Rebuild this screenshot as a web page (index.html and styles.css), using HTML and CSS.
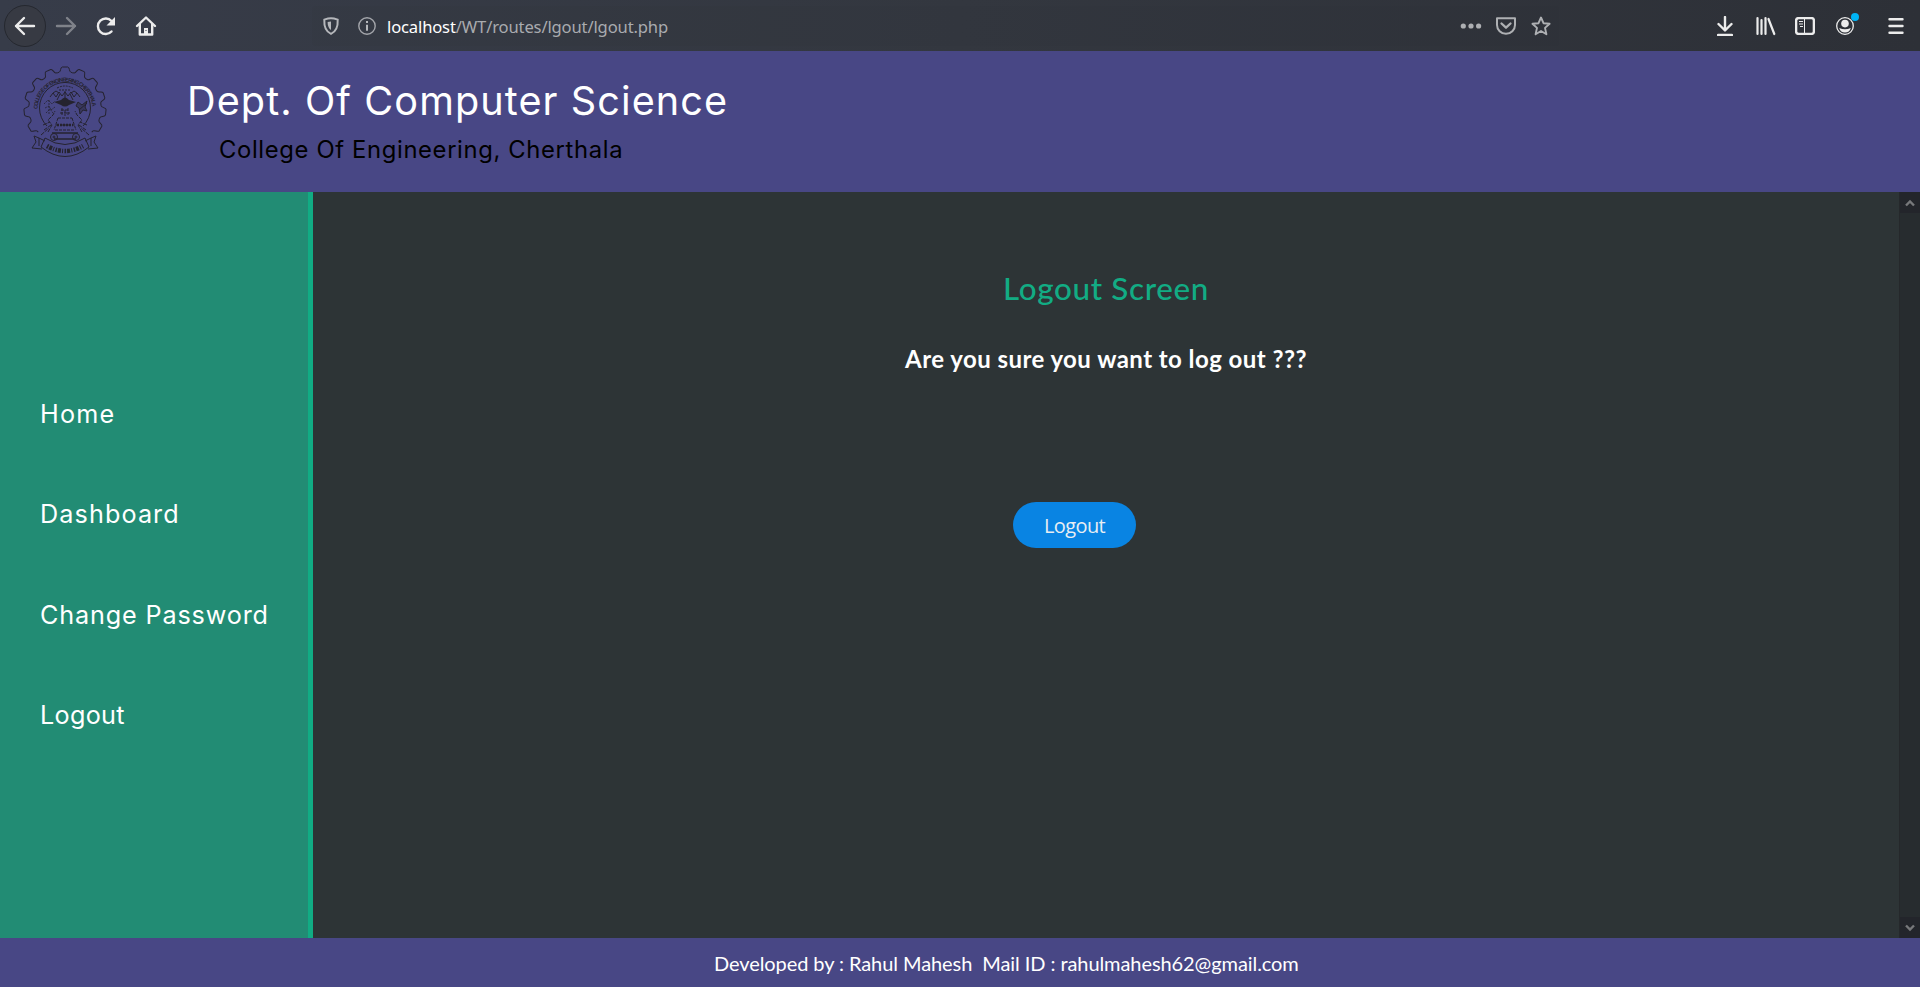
FILE: index.html
```html
<!DOCTYPE html>
<html lang="en">
<head>
<meta charset="utf-8">
<title>Logout</title>
<link rel="stylesheet" href="styles.css">
</head>
<body>
<div class="toolbar">
  <div class="nav-buttons">
    <span class="back"><svg width="22" height="20" viewBox="0 0 22 20"><path d="M20 10H2M10 2L2 10l8 8" class="w"/></svg></span>
    <svg class="fwd" width="22" height="20" viewBox="0 0 22 20"><path d="M2 10h18M12 2l8 8-8 8" class="w"/></svg>
    <svg class="reload" width="22" height="20" viewBox="0 0 22 20"><path d="M16.500 15.500A7.800 7.800 0 1 1 16.500 5" class="w"/><path d="M20 1v8.500h-8.500z" fill="#ececec"/></svg>
    <svg class="home" width="22" height="22" viewBox="0 0 22 22"><path d="M2 11L11 2.500l9 8.500" class="w"/><path d="M4.800 9.500V19.500H17.200V9.500" class="w"/><path d="M9 20v-7h4v7z" fill="#ececec"/><path d="M11 15v1" stroke="#363a46"/></svg>
  </div>
  <div class="address">
    <svg class="shield" width="18" height="20" viewBox="0 0 18 20"><path d="M9 2.200C6.500 2.200 4 3 2.300 3.600 2 10 3.500 15.500 9 17.800 14.500 15.500 16 10 15.700 3.600 14 3 11.500 2.200 9 2.200z" fill="none" stroke="#b5b7bb" stroke-width="2"/><path d="M9 5.500V14C6.700 12.500 5.600 9.800 5.600 6z" fill="#b5b7bb"/></svg>
    <svg class="info" width="18" height="18" viewBox="0 0 18 18"><circle cx="9" cy="9" r="8.200" fill="none" stroke="#a3a5aa" stroke-width="1.400"/><path d="M9 7.700v6M9 4v2" stroke="#b5b7bb" stroke-width="2"/></svg>
    <span class="url"><b>localhost</b>/WT/routes/lgout/lgout.php</span>
    <span class="grow"></span>
    <svg class="dots" width="22" height="20" viewBox="0 0 22 20" fill="#aeb0b3"><circle cx="3.300" cy="10" r="2.600"/><circle cx="11" cy="10" r="2.600"/><circle cx="18.600" cy="10" r="2.600"/></svg>
    <svg class="pocket" width="20" height="20" viewBox="0 0 20 20" fill="none" stroke="#aeb0b3" stroke-width="2"><path d="M1 2.200H19V9A9 8.800 0 0 1 1 9z" stroke-linejoin="round"/><path d="M5.500 7.500L10 11.700l4.500-4.200" stroke-width="2.300" stroke-linecap="round" stroke-linejoin="round"/></svg>
    <svg class="star" width="20" height="20" viewBox="0 0 20 20"><path d="M10 1.500l2.500 5.700 6.100.6-4.600 4.100 1.400 6.300L10 15l-5.400 3.200L6 11.900 1.400 7.800l6.100-.6z" fill="none" stroke="#aeb0b3" stroke-width="1.900" stroke-linejoin="round"/></svg>
  </div>
  <div class="tools">
    <svg class="download" width="16" height="20" viewBox="0 0 16 20"><path d="M8 1v13M1.500 8L8 14.500 14.500 8M1 19H15" class="w"/></svg>
    <svg class="library" width="20" height="20" viewBox="0 0 20 20"><path d="M1.500 2v16M5.500 4v14M9.500 2v16M12.500 3l5.800 15" class="w lib"/></svg>
    <svg class="sidebar-icon" width="20" height="18" viewBox="0 0 20 18"><rect x="1.100" y="1.100" width="17.800" height="15.800" rx="2.500" class="w"/><path d="M9.500 1v16" stroke="#ececec"/><path d="M4 4.500h4M4 7h4M5 9.500h3" stroke="#ececec" stroke-width="1.200"/></svg>
    <span class="account"><svg width="18" height="18" viewBox="0 0 18 18"><circle cx="9" cy="9" r="8.300" fill="none" stroke="#ececec" stroke-width="1.300"/><circle cx="9" cy="6.600" r="3.800" fill="#ececec"/><path d="M3.200 11Q9 13.500 14.800 11 13.500 15.500 9 15.500T3.200 11z" fill="#ececec"/></svg><i class="badge"></i></span>
    <svg class="menu" width="16" height="18" viewBox="0 0 16 18"><path d="M1.500 2.200h13M1.500 9h13M1.500 15.800h13" class="w"/></svg>
  </div>
</div>

<header class="header">
  <svg class="emblem" width="86" height="96" viewBox="-43 -43 86 96" fill="none" stroke="#25232f" stroke-width="1">
    <defs>
      <path id="tooth" d="M-7.500-35.200L-5.800-35.800C-4-36.500-4.800-40.800-2.700-41H2.700C4.800-40.800 4-36.500 5.800-35.800L7.500-35.200"/>
      <path id="ring" d="M-27.500 1A27.500 27.500 0 0 1 27.500 1"/>
    </defs>
    <use href="#tooth"/>
    <use href="#tooth" transform="rotate(24)"/><use href="#tooth" transform="rotate(48)"/><use href="#tooth" transform="rotate(72)"/><use href="#tooth" transform="rotate(96)"/><use href="#tooth" transform="rotate(120)"/>
    <use href="#tooth" transform="rotate(-24)"/><use href="#tooth" transform="rotate(-48)"/><use href="#tooth" transform="rotate(-72)"/><use href="#tooth" transform="rotate(-96)"/><use href="#tooth" transform="rotate(-120)"/>
    <path d="M-18 18A25.500 25.500 0 1 1 18 18"/>
    <text class="ring-text"><textPath href="#ring">COLLEGE OF ENGINEERING CHERTHALA</textPath></text>
    <path d="M-8-20Q0-24 8-20M-6-18H6" stroke-dasharray="2 1"/>
    <path d="M0-3V-17M-8-8L-5-14M8-8L5-14M-15-11l3-4 3 4 3-5 3 4 3-4 3 4 3-4 3 5 3-4 3 4M-12-15l3-2 3 2M6-15l3-2 3 2"/>
    <path d="M-11-6L-4-8Q0-13 4-8L11-6 4-3Q0 0-4-3z" fill="#25232f" stroke="none"/>
    <path d="M-21-4l4-4 4 4 3-3M-20 0l4-2 2 4 4-3M-19 5l4-4 3 4M-16-8v14" stroke-width=".8" stroke-dasharray="2 1"/>
    <path d="M13-6l4 3 5-4-2 6 2 4-4-1-3 4-1-6-3-2zM14 2l8-7" fill="#25232f" fill-opacity=".45"/>
    <path d="M-4 2H4M-5 5H5M-3 0V8M3 0V8M0 2V8M-7 10L-11 22M7 10L11 22M-7 10H7M-9 17H9M-10 22H10" stroke-dasharray="3 1"/>
    <path d="M-8 17H8" stroke-width="2.500" stroke-dasharray="2 1"/>
    <path d="M-13 25H13M-11 31H11" stroke-width="1.600"/>
    <circle cx="-11" cy="29" r="3.500"/><circle cx="11" cy="29" r="3.500"/>
    <circle cx="-11" cy="29" r="1"/><circle cx="11" cy="29" r="1"/>
    <path d="M-17 24L-13 17-17 12-12 7-10 3M-21 22l7-5M-22 17l7-3M-24 27l8-7M17 24L13 17 17 12 12 7 10 3M21 22l-7-5M22 17l-7-3M24 27l-8-7" stroke-dasharray="4 1"/>
    <path d="M-20 30Q0 43 20 30L24 39Q0 58-24 39zM-20 33L-26 30-31 28-29 34-33 40-23 41M20 33L26 30 31 28 29 34 33 40 23 41M-26 30v8M26 30v8"/>
    <path d="M-18 38Q0 48 18 38" stroke-width="4.500" stroke-dasharray="1.500 1 3 1.200 1 1.500"/>
  </svg>
  <div class="titles">
    <h1>Dept. Of Computer Science</h1>
    <h2>College Of Engineering, Cherthala</h2>
  </div>
</header>

<div class="body">
  <nav class="sidebar">
    <a class="home-link">Home</a>
    <a class="dash-link">Dashboard</a>
    <a class="pass-link">Change Password</a>
    <a class="out-link">Logout</a>
  </nav>
  <main class="content">
    <h3>Logout Screen</h3>
    <h4>Are you sure you want to log out ???</h4>
    <button class="logout">Logout</button>
  </main>
  <div class="scrollbar">
    <span class="sb"><svg width="10" height="8" viewBox="0 0 10 8"><path d="M1 6.500L5 2.500l4 4"/></svg></span>
    <span class="sb"><svg width="10" height="8" viewBox="0 0 10 8"><path d="M1 1.500l4 4 4-4"/></svg></span>
  </div>
</div>
<footer class="footer">Developed by : Rahul Mahesh &nbsp;Mail ID : rahulmahesh62@gmail.com</footer>
</body>
</html>
```
FILE: styles.css
```css
* { box-sizing: border-box; }
body { margin: 0; height: 989px; overflow: hidden; background: #fff; font-family: Inter, "Liberation Sans", sans-serif; display: flex; flex-direction: column; }
svg { display: block; flex: none; }
h1, h2, h3, h4 { margin: 0; font-weight: 400; white-space: nowrap; }

.toolbar { height: 51px; flex: none; display: flex; align-items: center; background: linear-gradient(90deg, #373c49, #33373f 50%, #2d3037); }
.w { fill: none; stroke: #ececec; stroke-width: 2.4; stroke-linecap: round; stroke-linejoin: round; }
.w.lib { stroke-width: 2.2; }
.nav-buttons { width: 312px; display: flex; align-items: center; padding-left: 4px; }
.back { width: 42px; height: 42px; border: 1px solid #25282f; border-radius: 50%; display: flex; align-items: center; justify-content: center; background: #373a43; }
.fwd { margin-left: 9px; opacity: .4; }
.reload { margin-left: 18px; }
.home { margin-left: 18px; }
.address { width: 1247px; height: 40px; border-radius: 3px; display: flex; align-items: center; padding: 0 8px 0 10px; background: rgba(0, 0, 0, .015); }
.info { margin-left: 18px; }
.url { margin-left: 11px; padding-top: 3px; font: 16.6px/24px "Noto Sans", sans-serif; letter-spacing: -.15px; color: #a9abaf; white-space: nowrap; }
.url b { font-weight: 400; color: #fff; }
.grow { flex: 1; }
.pocket { margin-left: 14px; }
.star { margin-left: 15px; }
.tools { display: flex; align-items: center; margin-left: 158px; }
.library { margin-left: 23px; }
.sidebar-icon { margin-left: 19px; }
.account { position: relative; margin-left: 21px; }
.badge { position: absolute; left: 15px; top: -4px; width: 8px; height: 8px; border-radius: 50%; background: #00b3f4; }
.menu { margin-left: 34px; }

.header { height: 141px; flex: none; display: flex; background: #484785; }
.emblem { margin: 14px 0 0 22px; overflow: visible; }
.ring-text { font: 700 5.5px "Liberation Sans", sans-serif; fill: #25232f; stroke: none; letter-spacing: -.9px; }
.titles { padding-left: 79px; }
h1 { margin-top: 26px; font-size: 39.6px; line-height: 48px; color: #fff; letter-spacing: 1.1px; }
h2 { margin: 10px 0 0 32px; font-size: 23.8px; line-height: 30px; color: #000; letter-spacing: .65px; }

.body { height: 746px; flex: none; display: flex; }
.sidebar { width: 313px; flex: none; border-right: 5px solid #11ac84; background: #228c74; padding: 202px 0 0 40px; display: flex; flex-direction: column; gap: 60.4px; }
.sidebar a { font-size: 25.2px; line-height: 40px; color: #fff; white-space: nowrap; }
.home-link { letter-spacing: 1.2px; }
.dash-link { letter-spacing: 1.1px; }
.pass-link { letter-spacing: .85px; }
.out-link { letter-spacing: .3px; }
.content { flex: 1; display: flex; flex-direction: column; align-items: center; background: #2d3436; }
h3 { margin: 76px 0 0; font: 500 31.4px/40px Lato, sans-serif; color: #12ac84; letter-spacing: .65px; }
h4 { margin: 36px 0 0; font: 700 24px/30px Lato, sans-serif; color: #fff; letter-spacing: .45px; }
.logout { margin: 128px 63px 0 0; width: 123px; height: 46px; border: 0; border-radius: 23px; background: #0984e3; color: #e8eef3; font: 20px/46px "Open Sans", sans-serif; letter-spacing: -.6px; padding: 1px 0 0; }
.scrollbar { width: 21px; flex: none; background: #272c2f; border-left: 1px solid #25282b; display: flex; flex-direction: column; justify-content: space-between; }
.sb { height: 21px; background: #23252b; display: flex; align-items: center; justify-content: center; }
.sb path { fill: none; stroke: #77787b; stroke-width: 2.4; }
.footer { height: 49px; flex: none; background: #484785; color: #fff; font: 20px/50px Lato, sans-serif; letter-spacing: -.08px; padding-left: 714px; white-space: nowrap; }
```
